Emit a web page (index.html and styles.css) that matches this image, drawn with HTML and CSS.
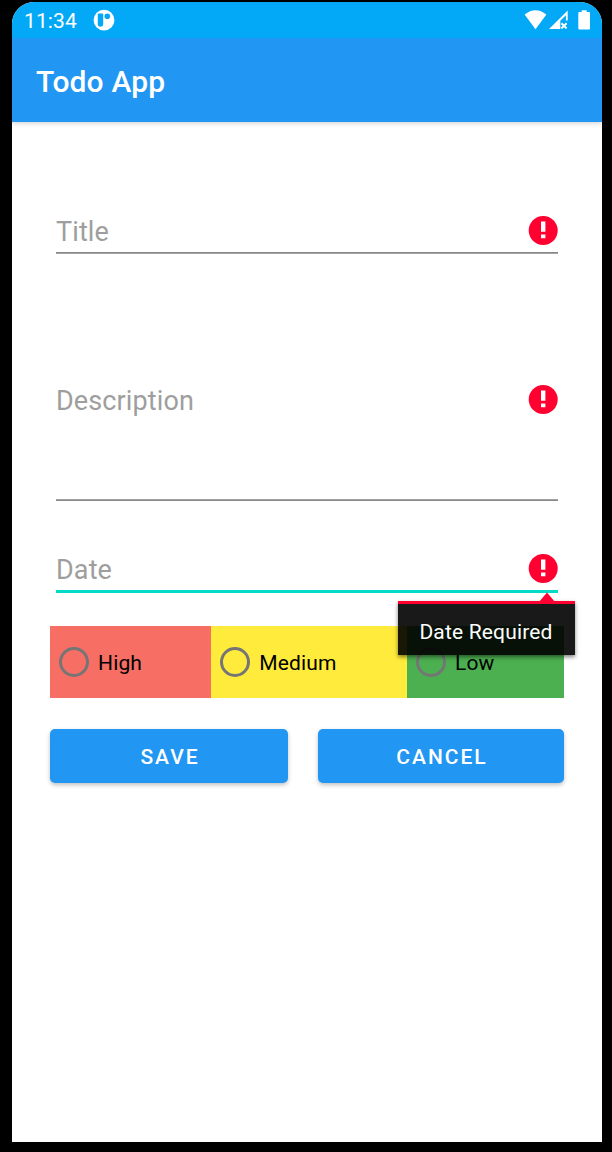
FILE: index.html
```html
<!DOCTYPE html>
<html lang="en">
<head>
<meta charset="utf-8">
<title>Todo App</title>
<link rel="stylesheet" href="styles.css">
</head>
<body>
<svg class="defs" width="0" height="0">
  <symbol id="error" viewBox="0 0 30 30">
    <circle cx="15.2" cy="15.5" r="14.5" fill="#ff0030"/>
    <path d="M13 6.4h4.4v10.4h-4.4zM13 19.6h4.4v3.6h-4.4z" fill="#fff"/>
  </symbol>
</svg>
<main class="phone">
  <div class="status">
    <span class="clock">11:34</span>
    <svg class="notice" width="22" height="22" viewBox="0 0 22 22">
      <circle cx="11" cy="11.2" r="10.4" fill="#fff"/>
      <path d="M4.8 5.6Q4.8 4.6 5.8 4.6H9.2Q10.2 4.6 10.2 5.6V15Q10.2 17.7 7.5 17.7Q4.8 17.7 4.8 15Z" fill="#03a9f7"/>
      <circle cx="14.3" cy="7.3" r="2.8" fill="#03a9f7"/>
    </svg>
    <svg class="signals" width="68" height="22" viewBox="524 9 68 22">
      <path d="M524.6 14.6Q535.5 5.9 546.4 14.6L535.5 29.2Z" fill="#fff"/>
      <path d="M549 29L567.7 10.5V20.5H565.9V15.2L560.3 20.8V29Z" fill="#fff"/>
      <path d="M561.4 23.2l5.2 5.2M566.6 23.2l-5.2 5.2" stroke="#fff" stroke-width="2"/>
      <path d="M579.3 12H581.7V10.3H586.7V12H589Q590 12 590 13V28.5Q590 29.6 589 29.6H579.3Q578.3 29.6 578.3 28.5V13Q578.3 12 579.3 12Z" fill="#fff"/>
    </svg>
  </div>
  <header class="appbar"><h1>Todo App</h1></header>
  <form class="form">
    <div class="field title"><span>Title</span><svg class="error"><use href="#error"/></svg></div>
    <div class="field description"><span>Description</span><svg class="error"><use href="#error"/></svg></div>
    <div class="field date">
      <span>Date</span><svg class="error"><use href="#error"/></svg>
      <div class="popup">Date Required
        <svg class="arrow" width="16" height="10" viewBox="0 0 16 10"><path d="M0 10L8 .4L16 10Z" fill="#ff0030"/></svg>
      </div>
    </div>
    <div class="priority">
      <label class="high"><i class="radio"></i>High</label>
      <label class="medium"><i class="radio"></i>Medium</label>
      <label class="low"><i class="radio"></i>Low</label>
    </div>
    <div class="actions">
      <button type="button">SAVE</button>
      <button type="button">CANCEL</button>
    </div>
  </form>
</main>
</body>
</html>
```
FILE: styles.css
```css
* { box-sizing: border-box; }
body {
  margin: 0;
  height: 1152px;
  padding: 2px 10px 10px 12px;
  background: #000;
  font-family: Roboto, sans-serif;
  overflow: hidden;
}
.defs { display: block; }
.phone {
  height: 1140px;
  background: #fff;
  border-radius: 22px 22px 0 0;
  overflow: hidden;
}
.status {
  position: relative;
  z-index: 1;
  display: flex;
  align-items: center;
  height: 36px;
  padding: 0 10px 0 12px;
  background: #03a9f7;
  color: #fff;
}
.clock { width: 69px; font-size: 21px; line-height: 36px; padding-top: 1px; letter-spacing: .1px; }
.signals { margin-left: auto; }
.appbar {
  display: flex;
  align-items: center;
  height: 84px;
  padding: 4px 24px 0;
  background: #2196f3;
  box-shadow: 0 1px 5px rgba(0, 0, 0, .2);
}
h1 { margin: 0; color: #fff; font-size: 30px; font-weight: 500; line-height: 36px; letter-spacing: .15px; }
.form { padding: 84px 38px 0; }
.field {
  position: relative;
  display: flex;
  justify-content: space-between;
  margin: 0 6px;
  padding-top: 9px;
  color: #9e9e9e;
  font-size: 27px;
  line-height: 34px;
  letter-spacing: .12px;
}
.title, .description {
  background: linear-gradient(#7b7b7b, #b0b0b0) bottom / 100% 2px no-repeat;
}
.title { height: 48px; }
.description {
  height: 126px;
  margin-top: 121px;
  background-image: linear-gradient(#b0b0b0, #7b7b7b);
}
.error { width: 30px; height: 30px; }
.date { height: 92px; padding-top: 52px; border-bottom: 3px solid #03dac5; }
.popup {
  position: absolute;
  z-index: 1;
  top: 100px;
  right: -17px;
  width: 177px;
  height: 54px;
  border-top: 3px solid #ff0030;
  background: rgba(0, 0, 0, .9);
  box-shadow: 0 2px 4px rgba(0, 0, 0, .5);
  color: #fff;
  font-size: 21px;
  line-height: 56px;
  letter-spacing: .17px;
  text-align: center;
  text-indent: -1px;
}
.arrow { position: absolute; top: -12px; right: 20px; }
.priority { display: flex; height: 72px; margin-top: 32.5px; }
.priority label {
  display: flex;
  align-items: center;
  gap: 9px;
  padding: 2px 0 0 9px;
  font-size: 21px;
  letter-spacing: .15px;
}
.high { width: 161.3px; background: #f76e64; }
.medium { width: 195.7px; background: #ffeb3b; }
.low { width: 157px; background: #4caf50; }
.radio {
  width: 30px;
  height: 30px;
  margin-top: -2px;
  border: 3px solid #757575;
  border-radius: 50%;
}
.actions { display: grid; grid-template-columns: 238px 246px; gap: 30px; margin-top: 31.5px; }
.actions button {
  height: 54px;
  padding: 2px 0 0 2px;
  border: 0;
  border-radius: 5px;
  background: #2196f3;
  box-shadow: 0 2px 4px rgba(0, 0, 0, .25);
  color: #fff;
  font: 500 21px Roboto, sans-serif;
  letter-spacing: 2px;
}
```
